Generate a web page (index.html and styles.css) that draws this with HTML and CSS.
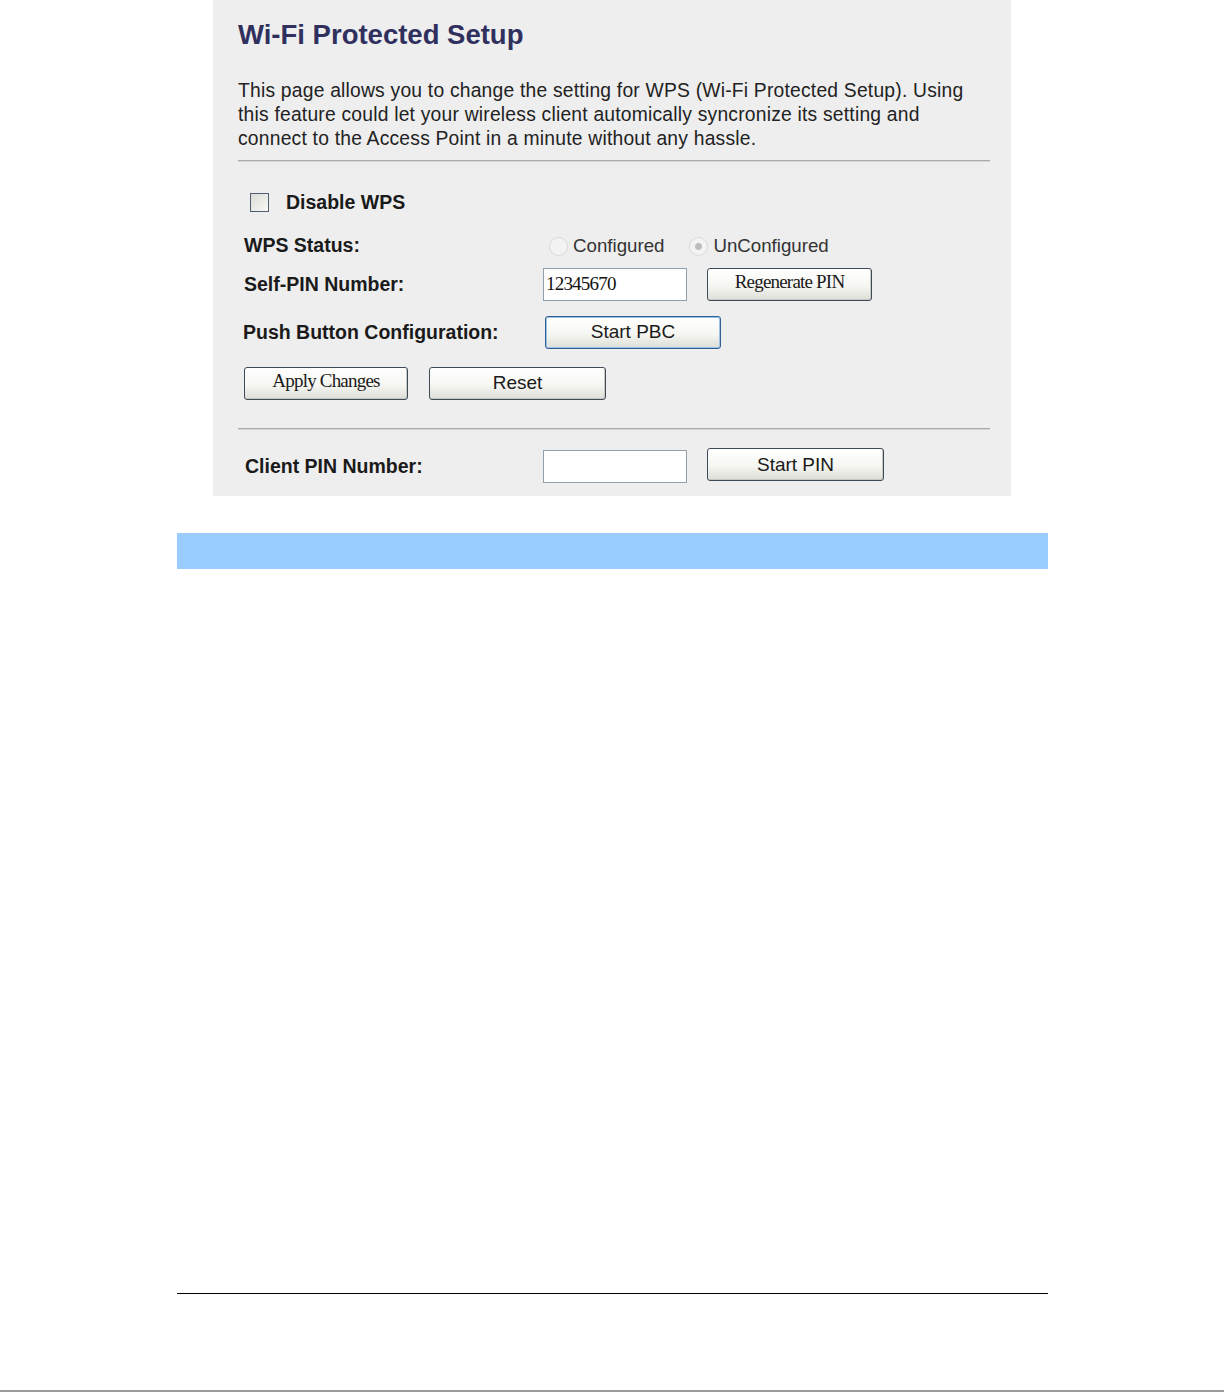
FILE: index.html
```html
<!DOCTYPE html>
<html>
<head>
<meta charset="utf-8">
<title>Wi-Fi Protected Setup</title>
<link rel="stylesheet" href="styles.css">
</head>
<body>
<div class="sheet">
  <div class="doc">
    <div class="panel">
      <h1 class="title">Wi-Fi Protected Setup</h1>
      <p class="desc">This page allows you to change the setting for WPS (Wi-Fi Protected Setup). Using this feature could let your wireless client automically syncronize its setting and connect to the Access Point in a minute without any hassle.</p>
      <div class="rule"></div>

      <div class="row row-disable">
        <label class="check-label"><input type="checkbox" class="check"><span>Disable WPS</span></label>
      </div>

      <div class="row row-status">
        <div class="label">WPS Status:</div>
        <div class="value radios">
          <label class="radio-label"><input type="radio" name="st" class="radio" disabled><span>Configured</span></label>
          <label class="radio-label radio-label-2"><input type="radio" name="st" class="radio" checked disabled><span>UnConfigured</span></label>
        </div>
      </div>

      <div class="row row-pin">
        <div class="label">Self-PIN Number:</div>
        <div class="value">
          <input type="text" class="field serif" value="12345670">
          <button class="btn serif btn-regen">Regenerate PIN</button>
        </div>
      </div>

      <div class="row row-pbc">
        <div class="label label-push">Push Button Configuration:</div>
        <div class="value value-pbc">
          <button class="btn btn-pbc">Start PBC</button>
        </div>
      </div>

      <div class="row row-apply">
        <button class="btn serif btn-apply">Apply Changes</button>
        <button class="btn btn-reset">Reset</button>
      </div>

      <div class="rule rule-2"></div>

      <div class="row row-client">
        <div class="label">Client PIN Number:</div>
        <div class="value">
          <input type="text" class="field field-client" value="">
          <button class="btn btn-startpin">Start PIN</button>
        </div>
      </div>
    </div>

    <div class="bluebar"></div>
    <div class="blackline"></div>
  </div>
</div>
</body>
</html>
```

FILE: styles.css
```css
html, body {
  margin: 0;
  padding: 0;
  background: #ffffff;
}

.sheet {
  height: 1390px;
  border-bottom: 2px solid #9a9a9a;
}

.doc {
  margin-left: 177px;
  width: 871px;
}

.panel {
  margin-left: 36px;
  width: 798px;
  height: 496px;
  box-sizing: border-box;
  background: #eeeeee;
  padding: 19px 21px 0 25px;
  font-family: "Liberation Sans", Arial, sans-serif;
  color: #1a1a1a;
}

.title {
  margin: 0;
  font-size: 27.5px;
  line-height: 32px;
  font-weight: bold;
  color: #30305e;
}

.desc {
  margin: 28px 0 0 0;
  font-size: 19.3px;
  line-height: 24px;
  letter-spacing: 0.21px;
  color: #222222;
  width: 745px;
}

.rule {
  margin-top: 9px;
  height: 0;
  border-top: 1px solid #a9a9a9;
  border-bottom: 1px solid #d6d6d6;
}

.rule-2 {
  margin-top: 27px;
}

.row {
  display: flex;
  align-items: center;
  height: 36px;
  padding-left: 6px;
  font-size: 19.5px;
}

.row-disable { margin-top: 22px; padding-left: 12px; }
.row-status { margin-top: 7px; }
.row-pin { margin-top: 3px; }
.row-pbc { margin-top: 12px; padding-left: 5px; }
.row-apply { margin-top: 15px; gap: 21px; }
.row-client { margin-top: 18px; padding-left: 7px; }

.label {
  width: 299px;
  font-weight: bold;
  color: #1a1a1a;
}

.label-push { width: 302px; }

.row-pin .label,
.row-client .label { width: 298px; }

.value {
  display: flex;
  align-items: center;
}

.check-label {
  display: flex;
  align-items: center;
  font-weight: bold;
  color: #1a1a1a;
}

.check {
  appearance: none;
  -webkit-appearance: none;
  margin: 0 17px 0 0;
  width: 19px;
  height: 19px;
  box-sizing: border-box;
  border: 1px solid #4d5f70;
  background: linear-gradient(135deg, #dcdcd6, #f8f8f6);
}

.radios {
  padding-left: 6px;
  padding-top: 2px;
  color: #333333;
  font-size: 18.7px;
}

.radio-label {
  display: flex;
  align-items: center;
}

.radio-label-2 { margin-left: 25px; }

.radio {
  appearance: none;
  -webkit-appearance: none;
  margin: 0 5px 0 0;
  width: 19px;
  height: 19px;
  box-sizing: border-box;
  border-radius: 50%;
  border: 1px solid #d9d9d9;
  background: #f3f3f3;
}

.radio:checked {
  background: radial-gradient(circle, #bdbdbd 0 3px, #f3f3f3 4px);
}

.field {
  box-sizing: border-box;
  width: 144px;
  height: 33px;
  margin: 0 0 0 1px;
  padding: 0 2px;
  border: 1px solid #8e9fae;
  background: #ffffff;
  font-size: 19px;
  color: #111111;
}

.field-client { margin-left: 0; }

.serif {
  font-family: "Liberation Serif", "Times New Roman", serif;
  letter-spacing: -0.8px;
}

.btn {
  box-sizing: border-box;
  height: 33px;
  margin: 0;
  padding: 0;
  border: 1px solid #3e4a58;
  border-radius: 3px;
  background: linear-gradient(#ffffff 0%, #f6f6f2 55%, #deded8 100%);
  box-shadow: inset -1px -1px 0 #c8c8c0;
  font-family: "Liberation Sans", Arial, sans-serif;
  font-size: 19px;
  color: #1a1a1a;
}

.btn.serif {
  font-family: "Liberation Serif", "Times New Roman", serif;
  letter-spacing: -0.8px;
  padding-bottom: 4px;
}

.btn-regen { width: 165px; margin-left: 20px; }
.btn-pbc { width: 176px; border-color: #2e5f96; box-shadow: inset 0 0 0 1px #9cc0e6; }
.value-pbc { padding-left: 0; }
.btn-apply { width: 164px; }
.btn-reset { width: 177px; }
.btn-startpin { width: 177px; margin-left: 20px; margin-top: -3px; }

.bluebar {
  margin-top: 37px;
  height: 36px;
  background: #99ccff;
}

.blackline {
  margin-top: 724px;
  height: 0;
  border-top: 1px solid #000000;
}
```
